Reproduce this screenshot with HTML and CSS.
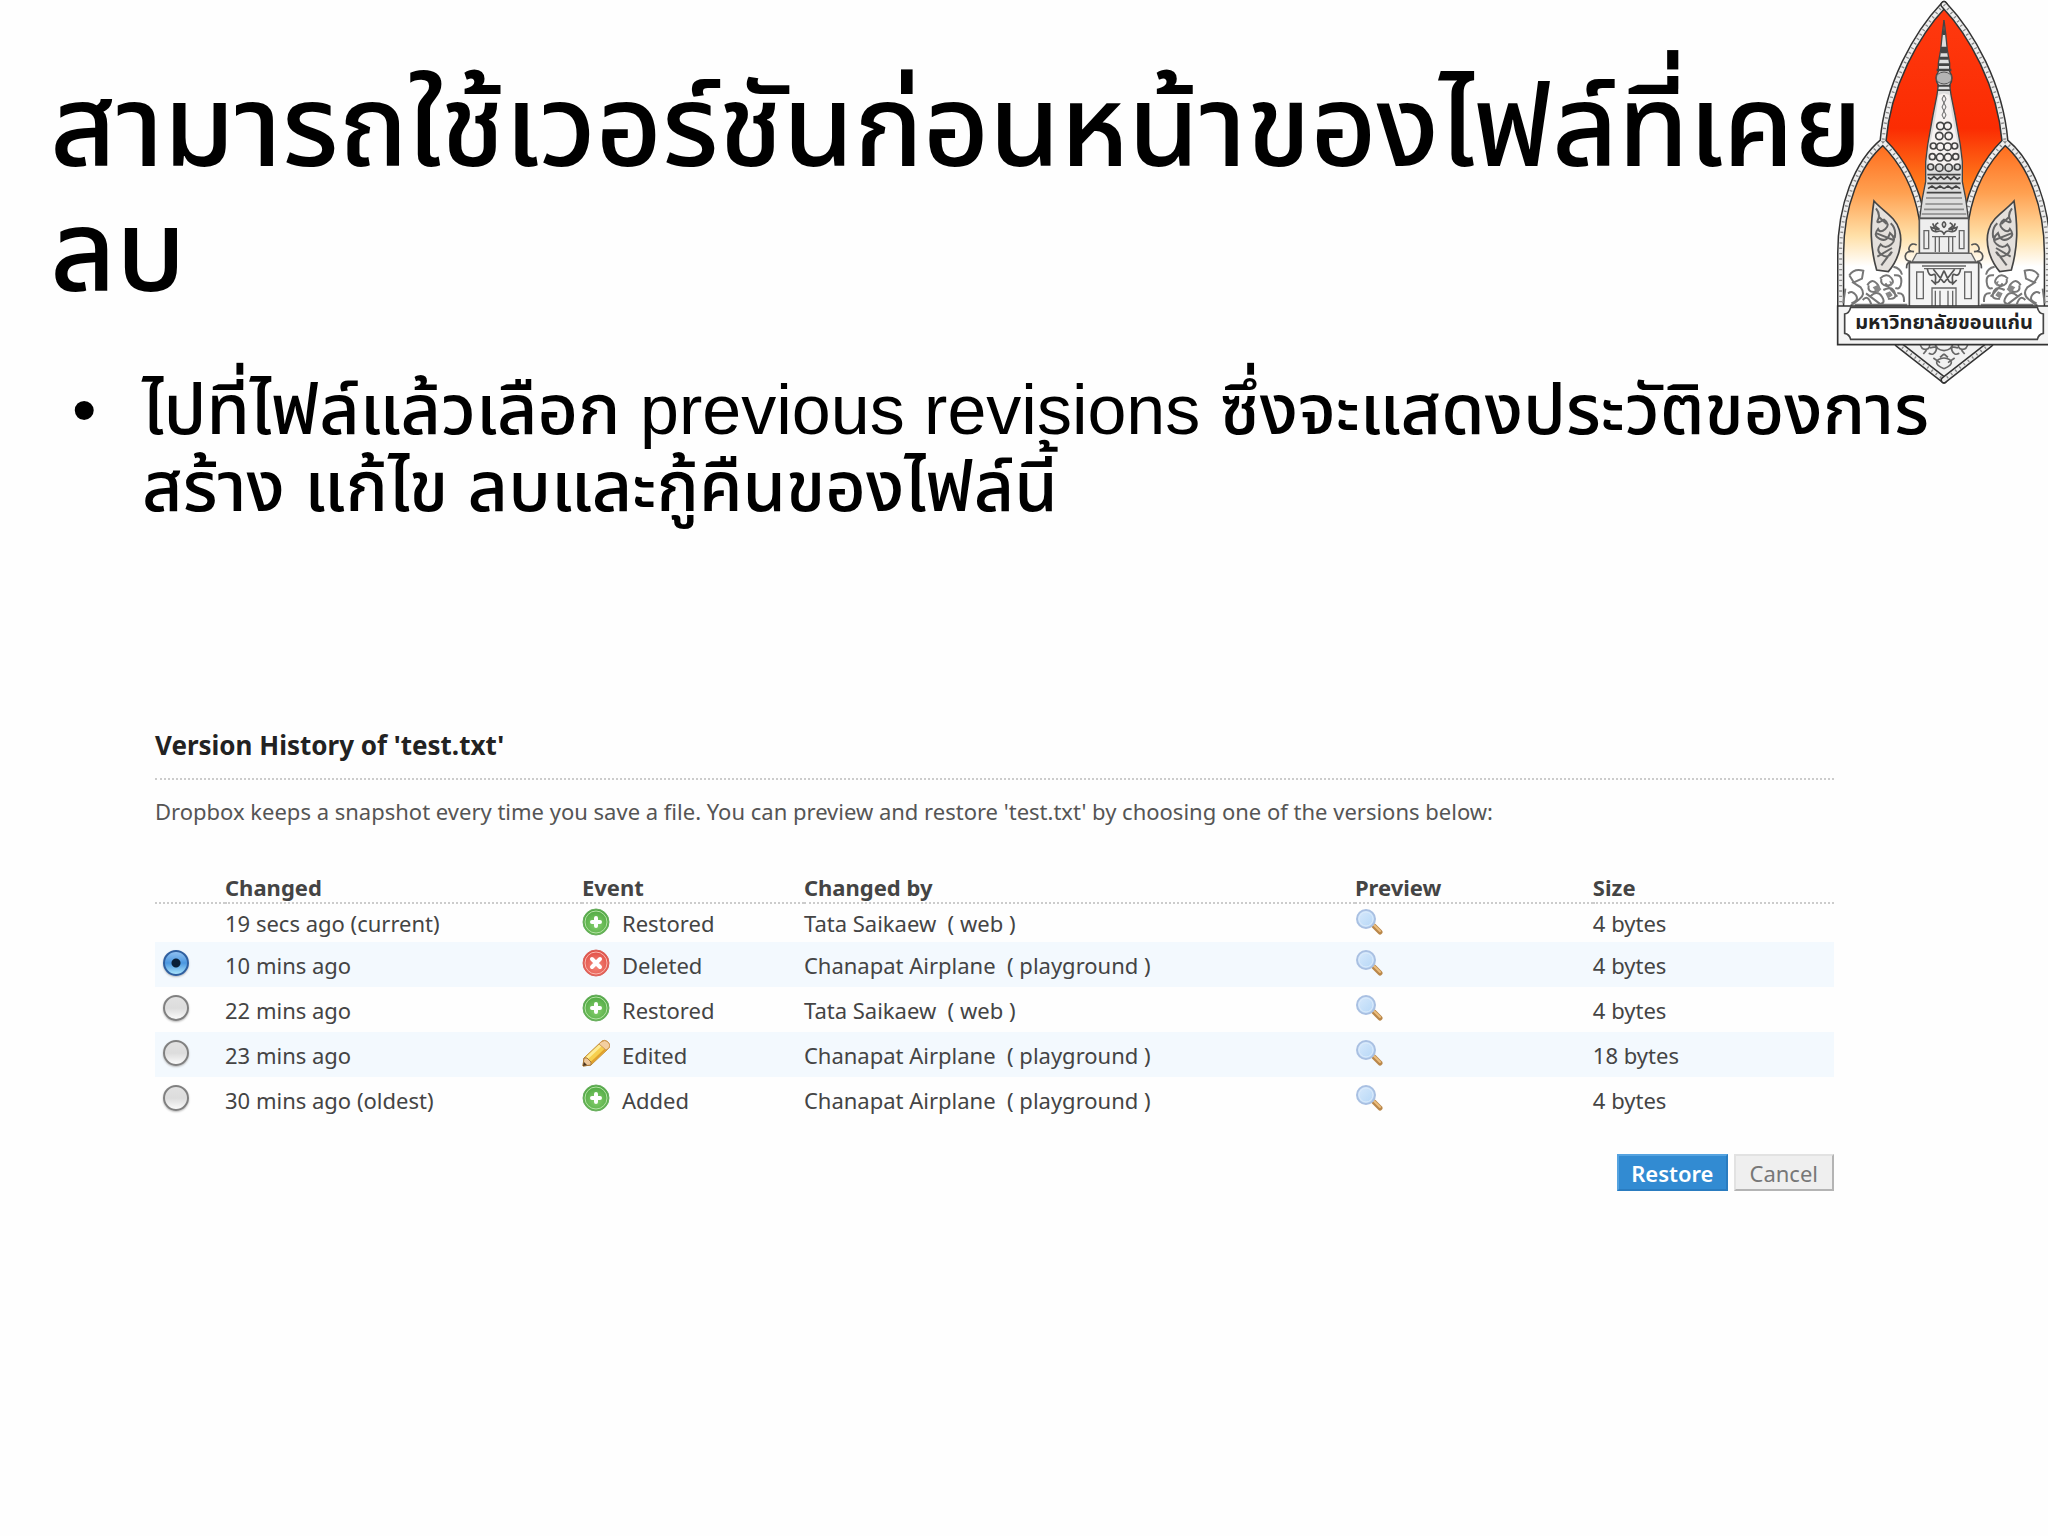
FILE: index.html
```html
<!DOCTYPE html>
<html lang="th">
<head>
    <meta charset="UTF-8">
    <meta name="viewport" content="width=device-width, initial-scale=1.0">
    <link rel="stylesheet" href="styles.css">
    <title>Version History</title>
</head>
<body>
    <!-- shared icons -->
    <svg class="sprite" aria-hidden="true">
        <defs>
            <radialGradient id="green" cx="50%" cy="60%" r="60%">
                <stop offset="0" stop-color="#86cf6c"/>
                <stop offset="1" stop-color="#4aa53f"/>
            </radialGradient>
            <radialGradient id="red" cx="50%" cy="60%" r="60%">
                <stop offset="0" stop-color="#f58a7c"/>
                <stop offset="1" stop-color="#df4a42"/>
            </radialGradient>
            <linearGradient id="glass" x1="0" y1="0" x2="1" y2="1">
                <stop offset="0" stop-color="#d9eafc"/>
                <stop offset="1" stop-color="#b4d6f6"/>
            </linearGradient>
        </defs>
        <symbol id="icon-add" viewBox="0 0 28 28">
            <circle cx="14" cy="14" r="13" fill="url(#green)" stroke="#6aae60" stroke-width="1"/>
            <circle cx="14" cy="14" r="11" fill="none" stroke="#b5e2a5" stroke-width="1"/>
            <path d="M14 10v8M10 14h8" stroke="#fff" stroke-width="4" stroke-linecap="round"/>
        </symbol>
        <symbol id="icon-delete" viewBox="0 0 28 28">
            <circle cx="14" cy="14" r="13" fill="url(#red)" stroke="#d9645c" stroke-width="1"/>
            <circle cx="14" cy="14" r="11" fill="none" stroke="#fbb9b0" stroke-width="1"/>
            <path d="M10 10l8 8M18 10l-8 8" stroke="#fff" stroke-width="4" stroke-linecap="round"/>
        </symbol>
        <symbol id="icon-edit" viewBox="0 0 28 28">
            <path d="M1 27l1-8L20 2q3-2 6 1t1 6L9 26z" fill="#f6cf4e" stroke="#c08a35" stroke-width="1"/>
            <path d="M5 19L21 4" stroke="#fdeb95" stroke-width="3"/>
            <path d="M9 24L25 9" stroke="#e0a02c" stroke-width="2"/>
            <path d="M19 3q4-3 7 0t1 6l-3 2-7-6z" fill="#f3cfa0" stroke="#cf9a5a" stroke-width="1"/>
            <path d="M1 27l1-8 3 0 4 4 0 3z" fill="#edc798" stroke="#a87838" stroke-width="1"/>
            <path d="M1 27l1-4 3 3z" fill="#4a3520"/>
        </symbol>
        <symbol id="icon-search" viewBox="0 0 28 28">
            <path d="M19 18l6 6" stroke="#b9874a" stroke-width="5" stroke-linecap="round"/>
            <path d="M19 17l6 6" stroke="#ecbd7c" stroke-width="2" stroke-linecap="round"/>
            <circle cx="11" cy="11" r="9" fill="url(#glass)" stroke="#a9c0e2" stroke-width="2"/>
            <circle cx="11" cy="11" r="7" fill="none" stroke="#dcebfb" stroke-width="1"/>
        </symbol>
    </svg>

    <main class="slide">
        <h1>สามารถใช้เวอร์ชันก่อนหน้าของไฟล์ที่เคย<br>ลบ</h1>

        <ul class="points">
            <li>ไปที่ไฟล์แล้วเลือก previous revisions ซึ่งจะแสดงประวัติของการ<br>สร้าง แก้ไข ลบและกู้คืนของไฟล์นี้</li>
        </ul>

        <form class="history" onsubmit="event.preventDefault()">
            <h2>Version History of 'test.txt'</h2>
            <p>Dropbox keeps a snapshot every time you save a file. You can preview and restore 'test.txt' by choosing one of the versions below:</p>

            <table>
                <colgroup>
                    <col class="col-pick">
                    <col class="col-changed">
                    <col class="col-event">
                    <col class="col-by">
                    <col class="col-preview">
                    <col>
                </colgroup>
                <thead>
                    <tr>
                        <td></td>
                        <th>Changed</th>
                        <th>Event</th>
                        <th>Changed by</th>
                        <th>Preview</th>
                        <th>Size</th>
                    </tr>
                </thead>
                <tbody>
                    <tr class="current">
                        <td></td>
                        <td>19 secs ago (current)</td>
                        <td><span class="event"><svg class="icon"><use href="#icon-add"/></svg>Restored</span></td>
                        <td>Tata Saikaew &nbsp;( web )</td>
                        <td><a href="#" aria-label="Preview"><svg class="icon"><use href="#icon-search"/></svg></a></td>
                        <td>4 bytes</td>
                    </tr>
                    <tr>
                        <td><input type="radio" name="version" id="v4" checked></td>
                        <td><label for="v4">10 mins ago</label></td>
                        <td><span class="event"><svg class="icon"><use href="#icon-delete"/></svg>Deleted</span></td>
                        <td>Chanapat Airplane &nbsp;( playground )</td>
                        <td><a href="#" aria-label="Preview"><svg class="icon"><use href="#icon-search"/></svg></a></td>
                        <td>4 bytes</td>
                    </tr>
                    <tr>
                        <td><input type="radio" name="version" id="v3"></td>
                        <td><label for="v3">22 mins ago</label></td>
                        <td><span class="event"><svg class="icon"><use href="#icon-add"/></svg>Restored</span></td>
                        <td>Tata Saikaew &nbsp;( web )</td>
                        <td><a href="#" aria-label="Preview"><svg class="icon"><use href="#icon-search"/></svg></a></td>
                        <td>4 bytes</td>
                    </tr>
                    <tr>
                        <td><input type="radio" name="version" id="v2"></td>
                        <td><label for="v2">23 mins ago</label></td>
                        <td><span class="event"><svg class="icon"><use href="#icon-edit"/></svg>Edited</span></td>
                        <td>Chanapat Airplane &nbsp;( playground )</td>
                        <td><a href="#" aria-label="Preview"><svg class="icon"><use href="#icon-search"/></svg></a></td>
                        <td>18 bytes</td>
                    </tr>
                    <tr>
                        <td><input type="radio" name="version" id="v1"></td>
                        <td><label for="v1">30 mins ago (oldest)</label></td>
                        <td><span class="event"><svg class="icon"><use href="#icon-add"/></svg>Added</span></td>
                        <td>Chanapat Airplane &nbsp;( playground )</td>
                        <td><a href="#" aria-label="Preview"><svg class="icon"><use href="#icon-search"/></svg></a></td>
                        <td>4 bytes</td>
                    </tr>
                </tbody>
            </table>

            <div class="buttons">
                <button type="submit" class="restore">Restore</button>
                <button type="button" class="cancel">Cancel</button>
            </div>
        </form>

        <!-- university emblem, left half is mirrored -->
        <svg class="emblem" viewBox="0 0 684 1170" role="img" aria-label="มหาวิทยาลัยขอนแก่น">
            <defs>
                <linearGradient id="flame" gradientUnits="userSpaceOnUse" x1="0" y1="0" x2="0" y2="700">
                    <stop offset="0" stop-color="#ff3a10"/>
                    <stop offset=".55" stop-color="#fb2c02"/>
                    <stop offset=".78" stop-color="#ff7a1c"/>
                    <stop offset="1" stop-color="#ffb060"/>
                </linearGradient>
                <linearGradient id="petal" gradientUnits="userSpaceOnUse" x1="0" y1="430" x2="0" y2="800">
                    <stop offset="0" stop-color="#ff6a1a"/>
                    <stop offset=".4" stop-color="#ffa050"/>
                    <stop offset=".75" stop-color="#ffe0a8"/>
                    <stop offset="1" stop-color="#fff"/>
                </linearGradient>
                <path id="arch" d="M372 14C290 100 203 255 189 425M189 425C110 490 62 620 62 760V1022M189 425C245 480 290 560 306 655"/>
                <g id="half">
                    <path d="M372 14C290 100 203 255 189 425C245 480 290 560 306 655H372z" fill="url(#flame)"/>
                    <path d="M189 425C110 490 62 620 62 760V920H300V655C290 560 245 480 189 425z" fill="url(#petal)"/>
                    <use href="#arch" fill="none" stroke="#333" stroke-width="22" stroke-linecap="round"/>
                    <use href="#arch" fill="none" stroke="#eee" stroke-width="13" stroke-linecap="round"/>
                    <use href="#arch" fill="none" stroke="#8a8a8a" stroke-width="9" stroke-dasharray="4 12"/>
                    <!-- spire -->
                    <path d="M372 60l-5 40-5 50-7 40v25q-14 20 0 40l-4 30-12 60-16 90-6 50v60l-10 50-8 60h73" fill="#ddd" stroke="#444" stroke-width="4"/>
                    <path d="M372 280l-16 5-8 60-18 90-4 60h46z" fill="#f7f3f2"/>
                    <path d="M372 60l-4 45h4zM363 140h9v20h-9zM358 170h14v9h-14zM354 190h18v8h-18zM350 206h22v8h-22zM352 254h20v6h-20zM353 268h19v5h-19z" fill="#444"/>
                    <path d="M372 216q-23 2-23 18t23 18" fill="#b4b4b4" stroke="#555" stroke-width="3"/>
                    <path d="M372 285l-6 12 6 12-6 12 6 12-6 12 6 12" fill="none" stroke="#666" stroke-width="3"/>
                    <g fill="none" stroke="#444" stroke-width="5">
                        <circle cx="361" cy="378" r="11"/><circle cx="358" cy="408" r="11"/>
                        <circle cx="340" cy="438" r="9"/><circle cx="361" cy="440" r="11"/>
                        <circle cx="337" cy="470" r="9"/><circle cx="360" cy="472" r="11"/>
                        <circle cx="332" cy="501" r="9"/><circle cx="358" cy="503" r="11"/>
                        <path d="M372 524H322M372 538l-10-8-10 8-10-8-10 8-8-6M372 550H322M372 566l-12-8-12 8-12-8-12 8M372 578H320"/>
                    </g>
                    <path d="M372 594H318M372 612H316M372 628H312M372 642H305" stroke="#888" stroke-width="5"/>
                    <!-- upper tier -->
                    <path d="M372 655H298V760H372" fill="#eee" stroke="#555" stroke-width="5"/>
                    <path d="M312 692h14v54h-14zM346 712V756M358 712V756M336 710H372" fill="none" stroke="#666" stroke-width="4"/>
                    <path d="M372 665q-10 8 0 18M355 668q-16 8-2 16t-20-2q4 16 20 12t19 10M338 670l10 22" fill="none" stroke="#555" stroke-width="5"/>
                    <!-- lower tier -->
                    <path d="M372 760H290L276 786H372" fill="#e4e4e4" stroke="#666" stroke-width="4"/>
                    <path d="M372 788H268V920H372" fill="#f4f4f4" stroke="#555" stroke-width="5"/>
                    <path d="M290 816h20v80h-20zM336 920V864H372M346 920V872M360 920V872M306 798H372M312 806H372" fill="none" stroke="#666" stroke-width="4"/>
                    <path d="M322 806q4 24 16 18t8 22q8 6 14-8l12-26M340 808l16 20 16 20M334 840l14 14" fill="none" stroke="#555" stroke-width="5"/>
                    <path d="M290 735q-16-8-22 6t14 14q-24-4-26 12t18 18q-16 2-14 20" fill="none" stroke="#555" stroke-width="5"/>
                    <!-- leaf ornament -->
                    <path d="M162 603C150 680 150 740 170 810L205 815C235 780 250 730 238 690C226 650 190 635 162 603z" fill="#e4e0dc" stroke="#444" stroke-width="5"/>
                    <path d="M168 625q14 18 6 34t18 0q20 14 4 28t-22 0q-16 20 6 30t30-18q22 18 4 34t-32 0q-16 20 4 32t30-10M176 650l24 22M170 700l50 20M172 770l44-26M184 796l30-40M212 670q18 16 12 44" fill="none" stroke="#666" stroke-width="6"/>
                    <!-- naga -->
                    <g fill="none" stroke="#777" stroke-width="6">
                        <path d="M88 826q14-22 42-14l-4 24-26 12 22 14q16 20-4 36t-26 18M88 826l14 22M84 880q14-10 24 6t-14 24M76 866l-6 44"/>
                        <path d="M142 856q12-22 28-6t-8 26q-20 0-16-20M150 890q22-22 36 0t-12 22M180 836q20-20 34-2t-14 24q-20-4-16-22M190 870q26-14 34 8t-20 18M222 826q24-4 22 20t-18 18M232 880q22-4 20 26M128 900q16-18 26 14M104 914H262M138 880l40 30M196 850l36 40M220 800q22 4 26 24"/>
                    </g>
                    <path d="M158 862l16-8 10 14-12 12zM196 880l14-6 8 12-14 10zM208 842l12 6-8 12z" fill="#888"/>
                    <!-- pendant -->
                    <path d="M234 1030L372 1140V1030z" fill="#f1f1f1"/>
                    <path d="M234 1032L372 1140" stroke="#333" stroke-width="21" stroke-linecap="round"/>
                    <path d="M234 1032L372 1140" stroke="#eee" stroke-width="12" stroke-linecap="round"/>
                    <path d="M234 1032L372 1140" stroke="#8a8a8a" stroke-width="8" stroke-dasharray="4 12"/>
                    <path d="M300 1030q4 20 18 18t10-18M326 1060q16 8 22-8t-18-8M372 1052q-24-2-28-24M372 1106q-24-10-22-20t22-12M340 1074l20 14M320 1050l-10 12M372 1062l-12 10" fill="none" stroke="#666" stroke-width="5"/>
                </g>
            </defs>
            <use href="#half"/>
            <use href="#half" transform="matrix(-1 0 0 1 744 0)"/>
            <path d="M53 918H691V1034H53z" fill="#f4f4f4" stroke="#333" stroke-width="5"/>
            <path d="M92 922H652Q656 940 670 942V1000Q656 1002 652 1018H92Q88 1002 74 1000V942Q88 940 92 922z" fill="#fff" stroke="#444" stroke-width="5"/>
            <text x="372" y="988" text-anchor="middle" class="emblem-name">มหาวิทยาลัยขอนแก่น</text>
        </svg>
    </main>
</body>
</html>
```
FILE: styles.css
```css
*{
    box-sizing: border-box;
}

body{
    margin: 0;
    background-color: #fefefe;
    color: #000;
    font-family: "Liberation Sans", "Noto Sans Thai", sans-serif;
}

.sprite{
    position: absolute;
    width: 0;
    height: 0;
}

.slide{
    position: relative;
    min-height: 100vh;
    padding-top: 64px;
}

h1{
    margin: 0 0 58px 50px;
    font-size: 114px;
    font-weight: 500;
    line-height: 125px;
    white-space: nowrap;
}

.points{
    margin: 0;
    padding: 0 0 0 72px;
    list-style: none;
    font-size: 70px;
    font-weight: 500;
    line-height: 77px;
    white-space: nowrap;
}

.points li{
    padding-left: 70px;
}

.points li::before{
    content: "•";
    float: left;
    width: 70px;
    margin-left: -70px;
}

.history{
    margin: 203px 214px 0 155px;
    font-family: "Noto Sans", sans-serif;
    font-size: 22px;
    line-height: 30px;
    color: #444;
}

h2{
    margin: 0 0 16px;
    padding-bottom: 17px;
    border-bottom: 2px dotted #ccc;
    font-size: 26px;
    line-height: 32px;
    color: #222;
}

.history p{
    margin: 0 0 46px;
    color: #555;
}

table{
    width: 100%;
    table-layout: fixed;
    border-collapse: collapse;
}

.col-pick{
    width: 4.17%;
}

.col-changed{
    width: 21.26%;
}

.col-event{
    width: 13.22%;
}

.col-by{
    width: 32.82%;
}

.col-preview{
    width: 14.17%;
}

thead tr{
    border-bottom: 2px dotted #ccc;
}

th,
td{
    height: 45px;
    padding: 0;
    text-align: left;
    white-space: nowrap;
}

th,
thead td{
    height: 30px;
}

.current td{
    height: 39px;
}

tbody tr:nth-child(even){
    background-color: #f3f9fe;
}

.event{
    display: flex;
    align-items: center;
    gap: 12px;
}

.icon{
    display: block;
    width: 28px;
    height: 28px;
    margin-bottom: 3px;
}

input[type="radio"]{
    appearance: none;
    display: block;
    width: 26px;
    height: 26px;
    margin: 0 0 4px 8px;
    border: 2px solid #808080;
    border-radius: 50%;
    background: linear-gradient(#e2e2e2, #dcdcdc 50%, #fafafa);
    box-shadow: 0 1px 2px #bbb;
}

input[type="radio"]:checked{
    border-color: #2f5f9f;
    background: radial-gradient(circle, #0a2038 0 4px, transparent 5px), linear-gradient(#8fc0f0, #4b97e0 50%, #a8e4fc);
}

.buttons{
    display: flex;
    justify-content: flex-end;
    gap: 6px;
    margin-top: 32px;
}

button{
    height: 37px;
    padding: 0 14px;
    border: 2px solid;
    font-family: inherit;
    font-size: 22px;
    line-height: 30px;
}

.restore{
    padding: 0 12px;
    border-color: #55a3e0 #2a7cc0 #2a7cc0 #55a3e0;
    background-color: #328bd2;
    color: #fff;
    font-weight: 600;
}

.cancel{
    border-color: #e2e2e2 #b4b4b4 #b4b4b4 #e2e2e2;
    background-color: #efefef;
    color: #777;
}

.emblem{
    position: absolute;
    top: 0;
    right: 0;
    width: 228px;
    height: 390px;
}

.emblem-name{
    font-size: 60px;
    font-weight: bold;
    fill: #222;
}
```
